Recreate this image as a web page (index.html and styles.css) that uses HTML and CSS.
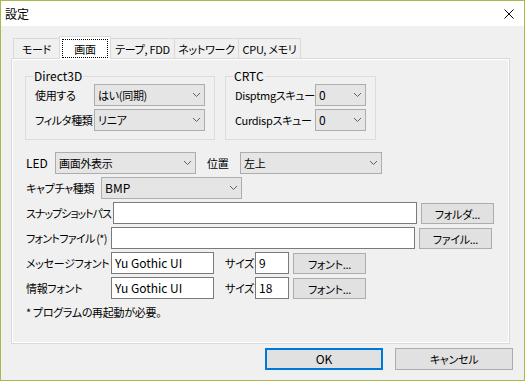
FILE: index.html
```html
<!DOCTYPE html>
<html lang="ja">
<head>
<meta charset="utf-8">
<title>設定</title>
<link rel="stylesheet" href="styles.css">
</head>
<body>
<div class="window">
  <div class="titlebar">
    <span class="title">設定</span>
    <svg class="close" width="10" height="10" viewBox="0 0 10 10"><path d="M0.5 0.5L9.5 9.5M9.5 0.5L0.5 9.5" stroke="#000" stroke-width="1" fill="none"/></svg>
  </div>
  <div class="content">
    <div class="tabs">
      <div class="tab t1 ja">モード</div>
      <div class="tab sel t2 ja"><span class="focus">画面</span></div>
      <div class="tab t3 ja">テープ, FDD</div>
      <div class="tab t4 ja">ネットワーク</div>
      <div class="tab t5 ja">CPU, メモリ</div>
    </div>
    <div class="panel">
      <div class="groups">
        <fieldset class="grp d3d">
          <legend>Direct3D</legend>
          <div class="frow"><span class="lbl ja">使用する</span><div class="combo w111"><span class="ja">はい(同期)</span><svg class="chev" width="7" height="4" viewBox="0 0 7 4"><path d="M0 0L3.5 3.5L7 0" stroke="#606060" fill="none"/></svg></div></div>
          <div class="frow"><span class="lbl ja">フィルタ種類</span><div class="combo w111"><span class="ja">リニア</span><svg class="chev" width="7" height="4" viewBox="0 0 7 4"><path d="M0 0L3.5 3.5L7 0" stroke="#606060" fill="none"/></svg></div></div>
        </fieldset>
        <fieldset class="grp crtc">
          <legend>CRTC</legend>
          <div class="frow"><span class="lbl ja">Disptmgスキュー</span><div class="combo w51"><span>0</span><svg class="chev" width="7" height="4" viewBox="0 0 7 4"><path d="M0 0L3.5 3.5L7 0" stroke="#606060" fill="none"/></svg></div></div>
          <div class="frow"><span class="lbl ja">Curdispスキュー</span><div class="combo w51"><span>0</span><svg class="chev" width="7" height="4" viewBox="0 0 7 4"><path d="M0 0L3.5 3.5L7 0" stroke="#606060" fill="none"/></svg></div></div>
        </fieldset>
      </div>
      <div class="rows">
        <div class="row">
          <span class="lbl l-led">LED</span>
          <div class="combo w141"><span class="ja">画面外表示</span><svg class="chev" width="7" height="4" viewBox="0 0 7 4"><path d="M0 0L3.5 3.5L7 0" stroke="#606060" fill="none"/></svg></div>
          <span class="lbl l-pos ja">位置</span>
          <div class="combo w142"><span class="ja">左上</span><svg class="chev" width="7" height="4" viewBox="0 0 7 4"><path d="M0 0L3.5 3.5L7 0" stroke="#606060" fill="none"/></svg></div>
        </div>
        <div class="row">
          <span class="lbl l-cap ja">キャプチャ種類</span>
          <div class="combo w141"><span>BMP</span><svg class="chev" width="7" height="4" viewBox="0 0 7 4"><path d="M0 0L3.5 3.5L7 0" stroke="#606060" fill="none"/></svg></div>
        </div>
        <div class="row">
          <span class="lbl l-snap ja">スナップショットパス</span>
          <div class="input w304"></div>
          <div class="btn ja">フォルダ...</div>
        </div>
        <div class="row">
          <span class="lbl l-85 l-ff ja">フォントファイル (*)</span>
          <div class="input w304"></div>
          <div class="btn ja">ファイル...</div>
        </div>
        <div class="row">
          <span class="lbl l-85 ja">メッセージフォント</span>
          <div class="input w103">Yu Gothic UI</div>
          <span class="lbl l-size ja">サイズ</span>
          <div class="input w34">9</div>
          <div class="btn ja">フォント...</div>
        </div>
        <div class="row">
          <span class="lbl l-85 ja">情報フォント</span>
          <div class="input w103">Yu Gothic UI</div>
          <span class="lbl l-size ja">サイズ</span>
          <div class="input w34">18</div>
          <div class="btn ja">フォント...</div>
        </div>
        <div class="note ja">* プログラムの再起動が必要。</div>
      </div>
    </div>
    <div class="footer">
      <div class="fbtn ok">OK</div>
      <div class="fbtn ja">キャンセル</div>
    </div>
  </div>
</div>
</body>
</html>
```
FILE: styles.css
```css
* { box-sizing: border-box; }
html, body { margin: 0; padding: 0; }
body {
  font-family: "Noto Sans CJK JP", sans-serif;
  font-size: 12px;
  line-height: 16px;
  color: #000;
  font-feature-settings: "palt";
  background: #f0f0f0;
}
.ja { font-size: 11px; letter-spacing: -0.3px; white-space: nowrap; }
.window {
  width: 525px;
  height: 381px;
  border: 1px solid #a9b94c;
  display: flex;
  flex-direction: column;
  background: #f0f0f0;
}
.titlebar {
  flex: none;
  height: 25px;
  background: #fff;
  display: flex;
  align-items: center;
  justify-content: space-between;
  padding: 0 10px 0 4px;
}
.title { line-height: 16px; padding-top: 1px; }
.close { display: block; }

.content { flex: 1; padding: 10px 14px 0 10px; }

.tabs {
  display: flex;
  align-items: flex-end;
  height: 22px;
  margin-left: 2px;
  position: relative;
  z-index: 1;
}
.tab {
  height: 20px;
  border: 1px solid #d9d9d9;
  border-bottom: none;
  margin-right: -1px;
  background: #f0f0f0;
  display: flex;
  align-items: center;
  justify-content: center;
  padding-top: 1px;
}
.t1 { width: 47px; }
.t2 { width: 52px; }
.t3 { width: 65px; }
.t4 { width: 65px; }
.t5 { width: 63px; }
.tab.sel {
  height: 23px;
  margin-bottom: -1px;
  background: #fff;
  position: relative;
  z-index: 2;
  padding: 2px 2px 0 2px;
  align-items: flex-start;
}
.focus {
  width: 46px;
  height: 19px;
  border: 1px dotted #000;
  display: flex;
  align-items: center;
  justify-content: center;
}

.panel {
  height: 286px;
  border: 1px solid #d9d9d9;
  box-shadow: inset 0 0 0 1px #fff;
  padding: 9px 13px 0 13px;
}

.groups { display: flex; gap: 10px; }
.grp {
  margin: 0;
  border: 1px solid #dcdcdc;
  padding: 0 9px 8px 9px;
  min-width: 0;
}
.grp legend { padding: 0 1px; margin-left: -2px; line-height: 16px; }
.d3d { width: 190px; }
.crtc { width: 151px; }
.d3d .lbl { width: 59px; }
.crtc .lbl { width: 80px; }
.frow { display: flex; align-items: center; height: 22px; }
.frow + .frow { margin-top: 3px; }

.lbl { flex: none; white-space: nowrap; }

.combo {
  flex: none;
  height: 22px;
  border: 1px solid #adadad;
  background: #e5e5e5;
  display: flex;
  align-items: center;
  justify-content: space-between;
  padding: 0 4px 0 3px;
}
.chev { display: block; }
.w51 { width: 51px; }
.w111 { width: 111px; }
.w141 { width: 141px; }
.w142 { width: 142px; }

.rows {
  margin: 12px 0 0 1px;
  display: flex;
  flex-direction: column;
  gap: 3px;
}
.row { display: flex; align-items: center; height: 22px; }
.l-led { width: 29px; }
.l-pos { width: 33px; margin-left: 11px; }
.l-cap { width: 75px; }
.l-snap { width: 87px; letter-spacing: -1px; }
.l-85 { width: 85px; }
.l-ff { letter-spacing: -0.7px; }
.l-size { width: 30px; margin-left: 11px; }

.input {
  flex: none;
  height: 22px;
  border: 1px solid #7a7a7a;
  background: #fff;
  padding: 0 3px;
  display: flex;
  align-items: center;
}
.w304 { width: 304px; }
.w103 { width: 103px; }
.w34 { width: 34px; }

.btn {
  flex: none;
  width: 73px;
  height: 21px;
  margin: 1px 0 0 4px;
  border: 1px solid #adadad;
  background: #e1e1e1;
  display: flex;
  align-items: center;
  justify-content: center;
}
.note { margin-top: 2px; }

.footer {
  display: flex;
  justify-content: flex-end;
  gap: 12px;
  margin: 4px -3px 0 0;
}
.fbtn {
  width: 118px;
  height: 22px;
  border: 1px solid #adadad;
  background: #e1e1e1;
  display: flex;
  align-items: center;
  justify-content: center;
}
.fbtn.ok { border: 2px solid #0078d7; }
```
